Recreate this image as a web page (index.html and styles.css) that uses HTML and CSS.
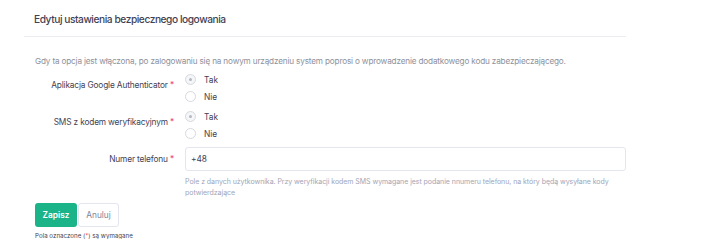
FILE: index.html
```html
<!DOCTYPE html>
<html lang="pl">
<head>
  <meta charset="UTF-8">
  <meta name="viewport" content="width=device-width, initial-scale=1.0">
  <title>Bezpieczne logowanie</title>
  <link rel="stylesheet" href="styles.css">
</head>
<body>
  <div class="panel">
    <div class="panel-head">
      <h1 class="panel-title">Edytuj ustawienia bezpiecznego logowania</h1>
    </div>
    <form class="panel-body">
      <p class="intro">Gdy ta opcja jest włączona, po zalogowaniu się na nowym urządzeniu system poprosi o wprowadzenie dodatkowego kodu zabezpieczającego.</p>

      <div class="row row-radio">
        <label class="row-label">Aplikacja Google Authenticator <span class="req">*</span></label>
        <div class="row-field">
          <label class="radio"><input type="radio" name="ga" checked disabled><span class="dot"></span>Tak</label>
          <label class="radio"><input type="radio" name="ga"><span class="dot"></span>Nie</label>
        </div>
      </div>

      <div class="row row-radio">
        <label class="row-label">SMS z kodem weryfikacyjnym <span class="req">*</span></label>
        <div class="row-field">
          <label class="radio"><input type="radio" name="sms" checked disabled><span class="dot"></span>Tak</label>
          <label class="radio"><input type="radio" name="sms"><span class="dot"></span>Nie</label>
        </div>
      </div>

      <div class="row row-input">
        <label class="row-label" for="phone">Numer telefonu <span class="req">*</span></label>
        <div class="row-field">
          <input type="text" id="phone" class="text-input" value="+48">
          <p class="help">Pole z danych użytkownika. Przy weryfikacji kodem SMS wymagane jest podanie nnumeru telefonu, na który będą wysyłane kody potwierdzające</p>
        </div>
      </div>

      <div class="actions">
        <button type="button" class="btn btn-save">Zapisz</button>
        <button type="button" class="btn btn-cancel">Anuluj</button>
      </div>
      <p class="note">Pola oznaczone (<span class="req">*</span>) są wymagane</p>
    </form>
  </div>
</body>
</html>
```

FILE: styles.css
```css
body {
  margin: 0;
  padding: 0;
  font-family: Inter, "Noto Sans", sans-serif;
  background: #fff;
  color: #3f4254;
}
.panel {
  width: 602px;
  margin-left: 24px;
}
.panel-head {
  height: 37px;
  border-bottom: 1px solid #ebedf2;
  padding-left: 10px;
  box-sizing: border-box;
}
.panel-title {
  margin: 0;
  padding-top: 13px;
  font-size: 10.2px;
  font-weight: 500;
  color: #3f4254;
  letter-spacing: -0.45px;
}
.panel-body {
  padding: 19px 0 0 11px;
}
.intro {
  margin: 0 0 5px;
  font-size: 8.2px;
  color: #8d919c;
  letter-spacing: -0.17px;
}
.row {
  display: flex;
}
.row-label {
  width: 139px;
  text-align: right;
  font-size: 8.3px;
  color: #3f4254;
  letter-spacing: -0.15px;
}
.row-radio {
  margin-bottom: 3px;
}
.row-radio .row-label {
  padding-top: 9px;
}
.row-input .row-label {
  padding-top: 7px;
}
.req {
  color: #f1416c;
}
.row-field {
  margin-left: 11px;
  flex: 1;
}
.radio {
  display: flex;
  align-items: center;
  height: 17px;
  font-size: 8.3px;
  color: #3f4254;
}
.radio input {
  display: none;
}
.dot {
  width: 9px;
  height: 9px;
  border: 1px solid #d7d9e0;
  border-radius: 50%;
  margin-right: 8px;
  position: relative;
  background: #fff;
}
.radio input:checked + .dot {
  background: #f5f6f8;
}
.radio input:checked + .dot::after {
  content: "";
  position: absolute;
  left: 3px;
  top: 3px;
  width: 3px;
  height: 3px;
  border-radius: 50%;
  background: #b5b8c3;
}
.row-input {
  margin-top: 5px;
}
.text-input {
  display: block;
  width: 100%;
  height: 24px;
  box-sizing: border-box;
  border: 1px solid #e4e6ef;
  border-radius: 3px;
  padding: 0 5px;
  font-family: inherit;
  font-size: 8.3px;
  color: #3f4254;
}
.help {
  margin: 5px 0 0;
  font-size: 7px;
  line-height: 11px;
  color: #a1a5b7;
  letter-spacing: -0.05px;
  width: 440px;
}
.actions {
  display: flex;
  margin-top: 5px;
}
.btn {
  height: 24px;
  font-family: inherit;
  font-size: 8.3px;
  border-radius: 3px;
  cursor: pointer;
}
.btn-save {
  width: 42px;
  background: #1bb388;
  border: none;
  color: #fff;
  font-weight: 600;
}
.btn-cancel {
  width: 41px;
  margin-left: 1px;
  background: #fff;
  border: 1px solid #e4e6ef;
  color: #7e8299;
}
.note {
  margin: 5px 0 0;
  font-size: 6.2px;
  color: #3f4254;
}
```
